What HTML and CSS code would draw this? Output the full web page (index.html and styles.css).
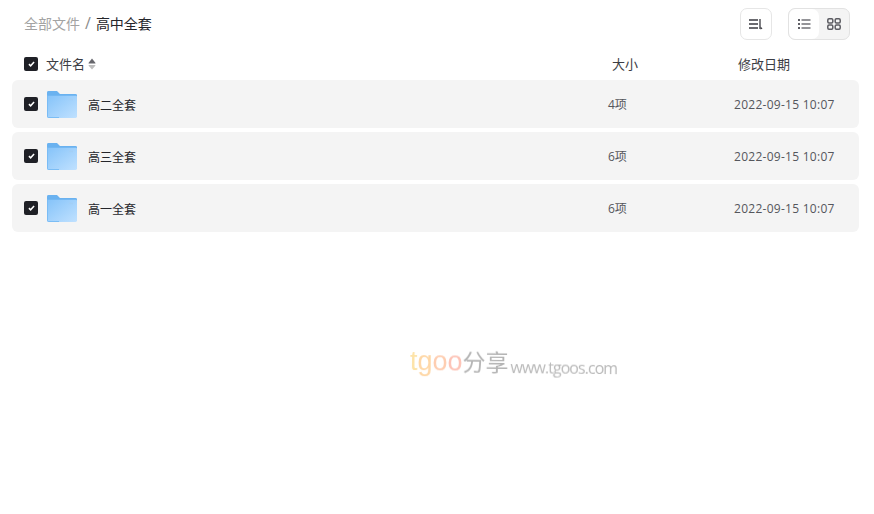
FILE: index.html
```html
<!DOCTYPE html>
<html>
<head>
    <title>高中全套</title>
<link rel="stylesheet" href="styles.css">
</head>
<body>
  <div class="toolbar">
    <div class="crumbs">
      <span class="crumb-link">全部文件</span>
      <span class="crumb-sep">/</span>
      <span class="crumb-now">高中全套</span>
    </div>
    <div class="tools">
      <div class="sort-btn">
        <svg width="14" height="12" viewBox="0 0 14 12"><path d="M0 2H9M0 6H9M0 10H9" stroke="#3a3a40" stroke-width="1.3" fill="none"/><path d="M11 1V11" stroke="#3a3a40" stroke-width="1.3"/><path d="M11.5 11.5V8.5L13.5 10.5Z" fill="#3a3a40"/></svg>
      </div>
      <div class="view-switch">
        <div class="view-btn view-on">
          <svg width="13" height="10" viewBox="0 0 13 10"><path d="M0 1H2M0 5H2M0 9H2" stroke="#2b2b33" stroke-width="1.3"/><path d="M3.5 1H12.5M3.5 5H12.5M3.5 9H12.5" stroke="#2b2b33" stroke-width="1.1"/></svg>
        </div>
        <div class="view-btn">
          <svg width="14" height="12" viewBox="0 0 14 12"><g fill="none" stroke="#5c5c62" stroke-width="1.5"><rect x="0.8" y="0.8" width="5" height="4.2" rx="1.2"/><rect x="8.2" y="0.8" width="5" height="4.2" rx="1.2"/><rect x="0.8" y="7" width="5" height="4.2" rx="1.2"/><rect x="8.2" y="7" width="5" height="4.2" rx="1.2"/></g></svg>
        </div>
      </div>
    </div>
  </div>

  <div class="head-row">
    <span class="check"><svg width="7" height="6" viewBox="0 0 8 7"><path d="M1 3.6L3 5.6L7 1.2" stroke="#fff" stroke-width="1.8" fill="none"/></svg></span>
    <span class="head-name">文件名</span>
    <svg class="sort-arrows" width="8" height="12" viewBox="0 0 8 12"><path d="M4 0.5L7.5 5Q7.5 5.5 7 5.5H1Q0.5 5.5 0.5 5Z" fill="#66666c"/><path d="M4 11.5L7.5 7.5Q7.5 7 7 7H1Q0.5 7 0.5 7.5Z" fill="#bdbdbd"/></svg>
    <span class="head-size">大小</span>
    <span class="head-date">修改日期</span>
  </div>

  <div class="file-list">
    <div class="file-row">
      <span class="check"><svg width="7" height="6" viewBox="0 0 8 7"><path d="M1 3.6L3 5.6L7 1.2" stroke="#fff" stroke-width="1.8" fill="none"/></svg></span>
      <svg class="folder" width="30" height="27" viewBox="0 0 30 28" preserveAspectRatio="none"><use href="#folder-icon"/></svg>
      <span class="file-name">高二全套</span>
      <span class="file-size">4项</span>
      <span class="file-date">2022-09-15 10:07</span>
    </div>
    <div class="file-row">
      <span class="check"><svg width="7" height="6" viewBox="0 0 8 7"><path d="M1 3.6L3 5.6L7 1.2" stroke="#fff" stroke-width="1.8" fill="none"/></svg></span>
      <svg class="folder" width="30" height="27" viewBox="0 0 30 28" preserveAspectRatio="none"><use href="#folder-icon"/></svg>
      <span class="file-name">高三全套</span>
      <span class="file-size">6项</span>
      <span class="file-date">2022-09-15 10:07</span>
    </div>
    <div class="file-row">
      <span class="check"><svg width="7" height="6" viewBox="0 0 8 7"><path d="M1 3.6L3 5.6L7 1.2" stroke="#fff" stroke-width="1.8" fill="none"/></svg></span>
      <svg class="folder" width="30" height="27" viewBox="0 0 30 28" preserveAspectRatio="none"><use href="#folder-icon"/></svg>
      <span class="file-name">高一全套</span>
      <span class="file-size">6项</span>
      <span class="file-date">2022-09-15 10:07</span>
    </div>
  </div>

  <div class="watermark"><span class="wm-t">t</span><span class="wm-g">g</span><span class="wm-o1">o</span><span class="wm-o2">o</span><span class="wm-cn">分享</span><span class="wm-url">www.tgoos.com</span></div>

  <svg width="0" height="0" class="defs">
    <defs>
      <linearGradient id="folder-front" x1="0" y1="0" x2="1" y2="1">
        <stop offset="0" stop-color="#85c3f9"/>
        <stop offset="1" stop-color="#c0e1ff"/>
      </linearGradient>
      <g id="folder-icon">
        <path d="M0 1.5Q0 0 1.5 0H10L13 3H28.5Q30 3 30 4.5V10H0Z" fill="#6ab2f0"/>
        <path d="M0 5H29Q30 5 30 6V26.5Q30 28 28.5 28H1.5Q0 28 0 26.5Z" fill="url(#folder-front)"/>
        <path d="M0.5 5V26.5Q0.5 27.5 1.5 27.5H12" fill="none" stroke="#79bcf5" stroke-width="1"/>
        <rect x="22" y="8" width="4" height="1.5" fill="#a3cff5"/>
      </g>
    </defs>
  </svg>
</body>
</html>
```

FILE: styles.css
```css
body {
  margin: 0;
  background-color: white;
  color: #25262b;
  font-family: "Open Sans", "Noto Sans CJK SC", sans-serif;
  font-size: 12px;
  position: relative;
  height: 514px;
  overflow: hidden;
}
.toolbar {
  display: flex;
  justify-content: space-between;
  align-items: center;
  height: 32px;
  padding: 8px 24px 0 24px;
}
.crumbs {
  display: flex;
  align-items: center;
  font-size: 14px;
  margin-top: -2px;
}
.crumb-link {
  color: #a3a3a3;
}
.crumb-sep {
  color: #8c8c8c;
  font-size: 16px;
  margin: 0 5px 0 5px;
}
.crumb-now {
  color: #25262b;
}
.tools {
  display: flex;
  gap: 16px;
}
.sort-btn {
  width: 30px;
  height: 30px;
  border: 1px solid #e6e6e6;
  border-radius: 7px;
  display: flex;
  justify-content: center;
  align-items: center;
}
.view-switch {
  width: 60px;
  height: 30px;
  border: 1px solid #e2e2e2;
  border-radius: 7px;
  background-color: #f4f4f4;
  display: flex;
  overflow: hidden;
}
.view-btn {
  width: 30px;
  display: flex;
  justify-content: center;
  align-items: center;
}
.view-on {
  background-color: white;
  border-radius: 7px;
}
.head-row {
  display: flex;
  align-items: center;
  height: 33px;
  padding: 7px 0 0 24px;
  font-size: 13px;
  color: #3c3d44;
}
.check {
  width: 14px;
  height: 14px;
  flex: none;
  border-radius: 2px;
  background-color: #1f2026;
  display: flex;
  justify-content: center;
  align-items: center;
}
.head-name {
  margin-left: 8px;
}
.sort-arrows {
  margin-left: 3px;
}
.head-size {
  margin-left: 516px;
}
.head-date {
  margin-left: 100px;
}
.file-list {
  display: flex;
  flex-direction: column;
  gap: 4px;
  padding: 0 15px 0 12px;
}
.file-row {
  display: flex;
  align-items: center;
  height: 48px;
  padding-left: 12px;
  background-color: #f4f4f4;
  border-radius: 6px;
}
.folder {
  margin: 1px 0 0 9px;
}
.file-name {
  margin: 1px 0 0 11px;
  width: 521px;
}
.file-size {
  width: 125px;
  color: #55565c;
  margin-left: -1px;
}
.file-date {
  color: #55565c;
  letter-spacing: 0.27px;
  margin-left: 1px;
}
.defs {
  position: absolute;
}
.watermark {
  position: absolute;
  left: 410px;
  top: 343px;
  display: flex;
  align-items: baseline;
  white-space: nowrap;
  font-family: "Open Sans", "Noto Sans CJK SC", sans-serif;
  filter: blur(0.3px);
  transform: rotate(0.6deg);
  transform-origin: left center;
}
.wm-t, .wm-g, .wm-o1, .wm-o2 {
  font-size: 27px;
  font-family: "Liberation Sans", sans-serif;
}
.wm-t {
  color: #fde3a8;
}
.wm-g {
  color: #fed7a6;
}
.wm-o1 {
  color: #fecdb0;
}
.wm-o2 {
  color: #fdc3b6;
}
.wm-cn {
  font-size: 23px;
  color: #b4b4b4;
}
.wm-url {
  font-size: 16px;
  color: #b9b9b9;
  margin: 0 0 -2px 2px;
  letter-spacing: -0.95px;
  position: relative;
  top: 2px;
}
```
